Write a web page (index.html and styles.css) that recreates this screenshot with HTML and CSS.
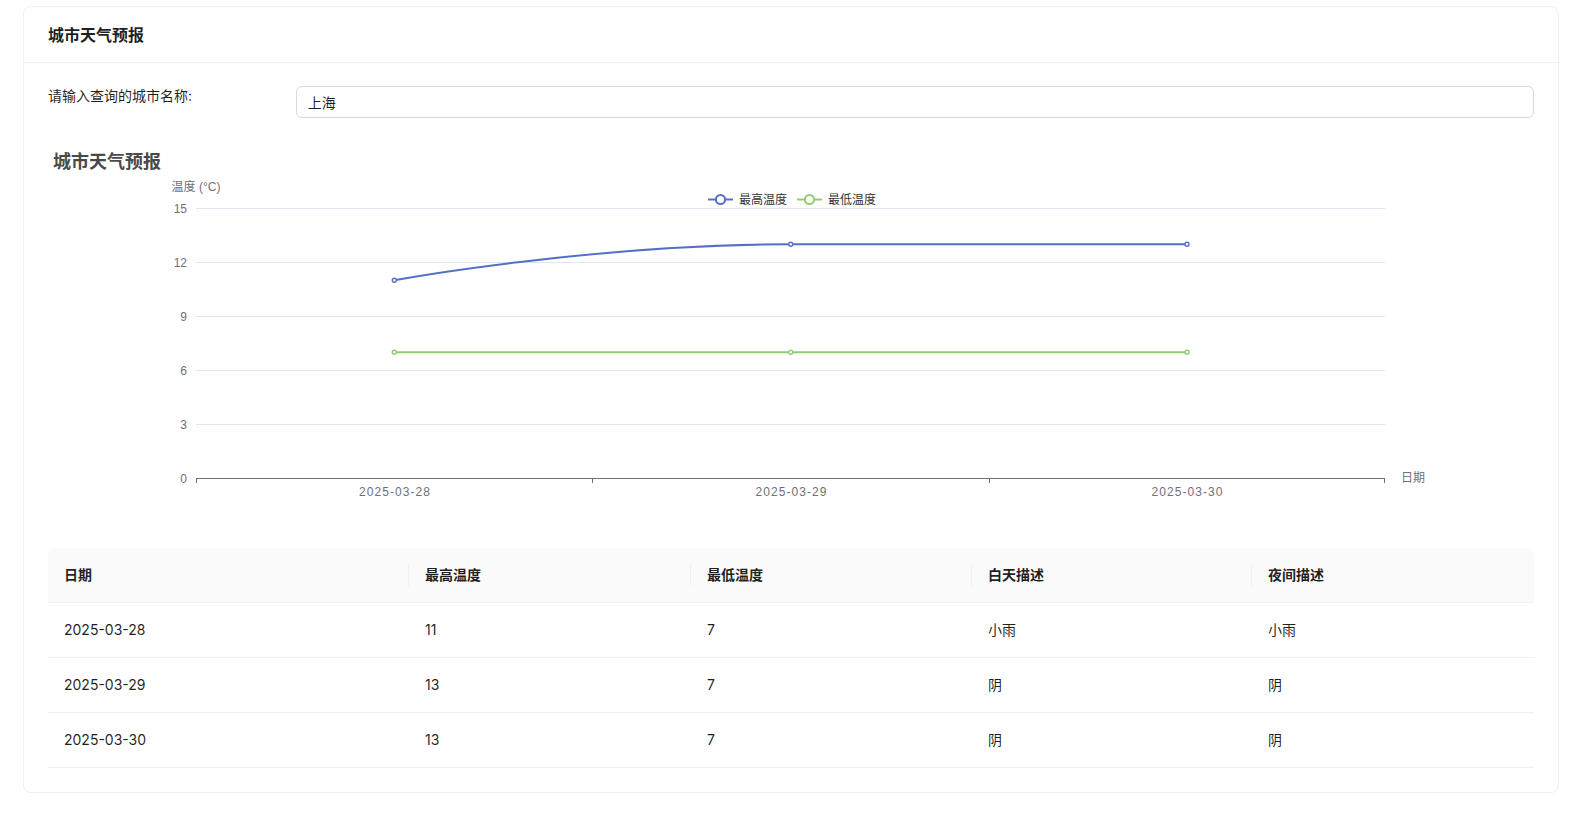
FILE: index.html
```html
<!DOCTYPE html>
<html lang="zh-CN">
<head>
<meta charset="utf-8">
<title>城市天气预报</title>
<link rel="stylesheet" href="styles.css">
</head>
<body>
<div class="card">
  <div class="card-head">城市天气预报</div>
  <div class="card-body">
    <div class="form-row">
      <div class="form-label">请输入查询的城市名称:</div>
      <div class="form-control"><input class="input" type="text" value="上海"></div>
    </div>
    <div class="chart">
      <svg class="chart-svg" width="1486" height="406" viewBox="48 142 1486 406" xmlns="http://www.w3.org/2000/svg">
        <text class="c-title" x="53" y="160">城市天气预报</text>
        <text class="c-axisname" x="196" y="186.5" text-anchor="middle">温度 (°C)</text>

        <g class="legend">
          <line x1="708" y1="199.5" x2="733" y2="199.5" stroke="#5470C6" stroke-width="2"/>
          <circle cx="720.5" cy="199.5" r="4.6" fill="#fff" stroke="#5470C6" stroke-width="2"/>
          <text class="c-legend" x="739" y="200">最高温度</text>
          <line x1="797" y1="199.5" x2="822" y2="199.5" stroke="#91CC75" stroke-width="2"/>
          <circle cx="809.5" cy="199.5" r="4.6" fill="#fff" stroke="#91CC75" stroke-width="2"/>
          <text class="c-legend" x="828" y="200">最低温度</text>
        </g>

        <g class="grid" stroke="#E0E6F1" stroke-width="1">
          <line x1="196" y1="208.5" x2="1385" y2="208.5"/>
          <line x1="196" y1="262.5" x2="1385" y2="262.5"/>
          <line x1="196" y1="316.5" x2="1385" y2="316.5"/>
          <line x1="196" y1="370.5" x2="1385" y2="370.5"/>
          <line x1="196" y1="424.5" x2="1385" y2="424.5"/>
        </g>

        <g class="c-label">
          <text x="187" y="208.5" text-anchor="end">15</text>
          <text x="187" y="262.5" text-anchor="end">12</text>
          <text x="187" y="316.5" text-anchor="end">9</text>
          <text x="187" y="370.5" text-anchor="end">6</text>
          <text x="187" y="424.5" text-anchor="end">3</text>
          <text x="187" y="478.5" text-anchor="end">0</text>
        </g>

        <g stroke="#6E7079" stroke-width="1">
          <line x1="196" y1="478.5" x2="1385" y2="478.5"/>
          <line x1="196.5" y1="478" x2="196.5" y2="483"/>
          <line x1="592.5" y1="478" x2="592.5" y2="483"/>
          <line x1="989.5" y1="478" x2="989.5" y2="483"/>
          <line x1="1384.5" y1="478" x2="1384.5" y2="483"/>
        </g>

        <g class="c-label">
          <text x="359" y="491.5" textLength="71" lengthAdjust="spacing">2025-03-28</text>
          <text x="755.5" y="491.5" textLength="71" lengthAdjust="spacing">2025-03-29</text>
          <text x="1151.5" y="491.5" textLength="71" lengthAdjust="spacing">2025-03-30</text>
          <text x="1401" y="477.5">日期</text>
        </g>

        <path d="M394.3,280.3 C394.3,280.3 591.7,244.2 790.7,244.2 L1187,244.2" fill="none" stroke="#5470C6" stroke-width="2"/>
        <path d="M394.3,352.2 L1187,352.2" fill="none" stroke="#91CC75" stroke-width="2"/>

        <g fill="#fff" stroke="#5470C6" stroke-width="1.4">
          <circle cx="394.3" cy="280.3" r="2"/>
          <circle cx="790.7" cy="244.2" r="2"/>
          <circle cx="1187" cy="244.2" r="2"/>
        </g>
        <g fill="#fff" stroke="#91CC75" stroke-width="1.4">
          <circle cx="394.3" cy="352.2" r="2"/>
          <circle cx="790.7" cy="352.2" r="2"/>
          <circle cx="1187" cy="352.2" r="2"/>
        </g>
      </svg>
    </div>
    <table class="table">
      <colgroup>
        <col class="col-date"><col class="col-num"><col class="col-num2"><col class="col-desc"><col class="col-num">
      </colgroup>
      <thead>
        <tr>
          <th class="th">日期</th>
          <th class="th">最高温度</th>
          <th class="th">最低温度</th>
          <th class="th">白天描述</th>
          <th class="th th-last">夜间描述</th>
        </tr>
      </thead>
      <tbody>
        <tr><td class="td">2025-03-28</td><td class="td">11</td><td class="td">7</td><td class="td">小雨</td><td class="td">小雨</td></tr>
        <tr><td class="td">2025-03-29</td><td class="td">13</td><td class="td">7</td><td class="td">阴</td><td class="td">阴</td></tr>
        <tr><td class="td">2025-03-30</td><td class="td">13</td><td class="td">7</td><td class="td">阴</td><td class="td">阴</td></tr>
      </tbody>
    </table>
  </div>
</div>
</body>
</html>
```

FILE: styles.css
```css
* { box-sizing: border-box; }

html, body {
  margin: 0;
  padding: 0;
  background: #ffffff;
}

body {
  font-family: Inter, "Noto Sans CJK SC", sans-serif;
  font-size: 14px;
  color: rgba(0, 0, 0, 0.88);
}

.card {
  margin: 6px 22px 0 23px;
  border: 1px solid #f0f0f0;
  border-radius: 8px;
  background: #fff;
}

.card-head {
  height: 56px;
  padding: 0 24px 2px;
  display: flex;
  align-items: center;
  border-bottom: 1px solid #f0f0f0;
  font-size: 16px;
  font-weight: 600;
  color: rgba(0, 0, 0, 0.88);
}

.card-body {
  padding: 23px 24px 24px;
}

.form-row {
  display: flex;
  align-items: flex-start;
  margin-bottom: 24px;
}

.form-label {
  flex: 0 0 16.6667%;
  line-height: 20px;
  font-size: 14px;
  color: rgba(0, 0, 0, 0.88);
}

.form-control {
  flex: 1 1 auto;
}

.input {
  display: block;
  width: 100%;
  height: 32px;
  padding: 4px 11px;
  border: 1px solid #d9d9d9;
  border-radius: 6px;
  font-family: Inter, "Noto Sans CJK SC", sans-serif;
  font-size: 14px;
  color: rgba(0, 0, 0, 0.88);
  background: #fff;
  outline: none;
}

.chart {
  height: 406px;
}

.chart-svg {
  display: block;
}

.c-title {
  font-family: "Noto Sans CJK SC", sans-serif;
  font-size: 18px;
  font-weight: 700;
  fill: #4a4a4a;
  dominant-baseline: central;
}

.c-axisname,
.c-label text {
  font-family: "Liberation Sans", "Noto Sans CJK SC", sans-serif;
  font-size: 12px;
  fill: #6E7079;
  dominant-baseline: central;
}

.c-legend {
  font-family: "Liberation Sans", "Noto Sans CJK SC", sans-serif;
  font-size: 12px;
  fill: #333;
  dominant-baseline: central;
}

.table {
  width: 100%;
  border-collapse: separate;
  border-spacing: 0;
  table-layout: fixed;
}

.col-date { width: 361px; }
.col-num { width: 282px; }
.col-num2 { width: 281px; }
.col-desc { width: 280px; }

.th {
  position: relative;
  height: 55px;
  padding: 16px;
  text-align: left;
  font-weight: 600;
  line-height: 22px;
  background: #fafafa;
  border-bottom: 1px solid #f0f0f0;
  color: rgba(0, 0, 0, 0.88);
}

.th:first-child { border-top-left-radius: 8px; }
.th-last { border-top-right-radius: 8px; }

.th:not(.th-last)::after {
  content: "";
  position: absolute;
  right: 0;
  top: 50%;
  width: 1px;
  height: 22px;
  transform: translateY(-50%);
  background: #f0f0f0;
}

.td {
  height: 55px;
  padding: 16px;
  line-height: 22px;
  border-bottom: 1px solid #f0f0f0;
  color: rgba(0, 0, 0, 0.88);
}
```
